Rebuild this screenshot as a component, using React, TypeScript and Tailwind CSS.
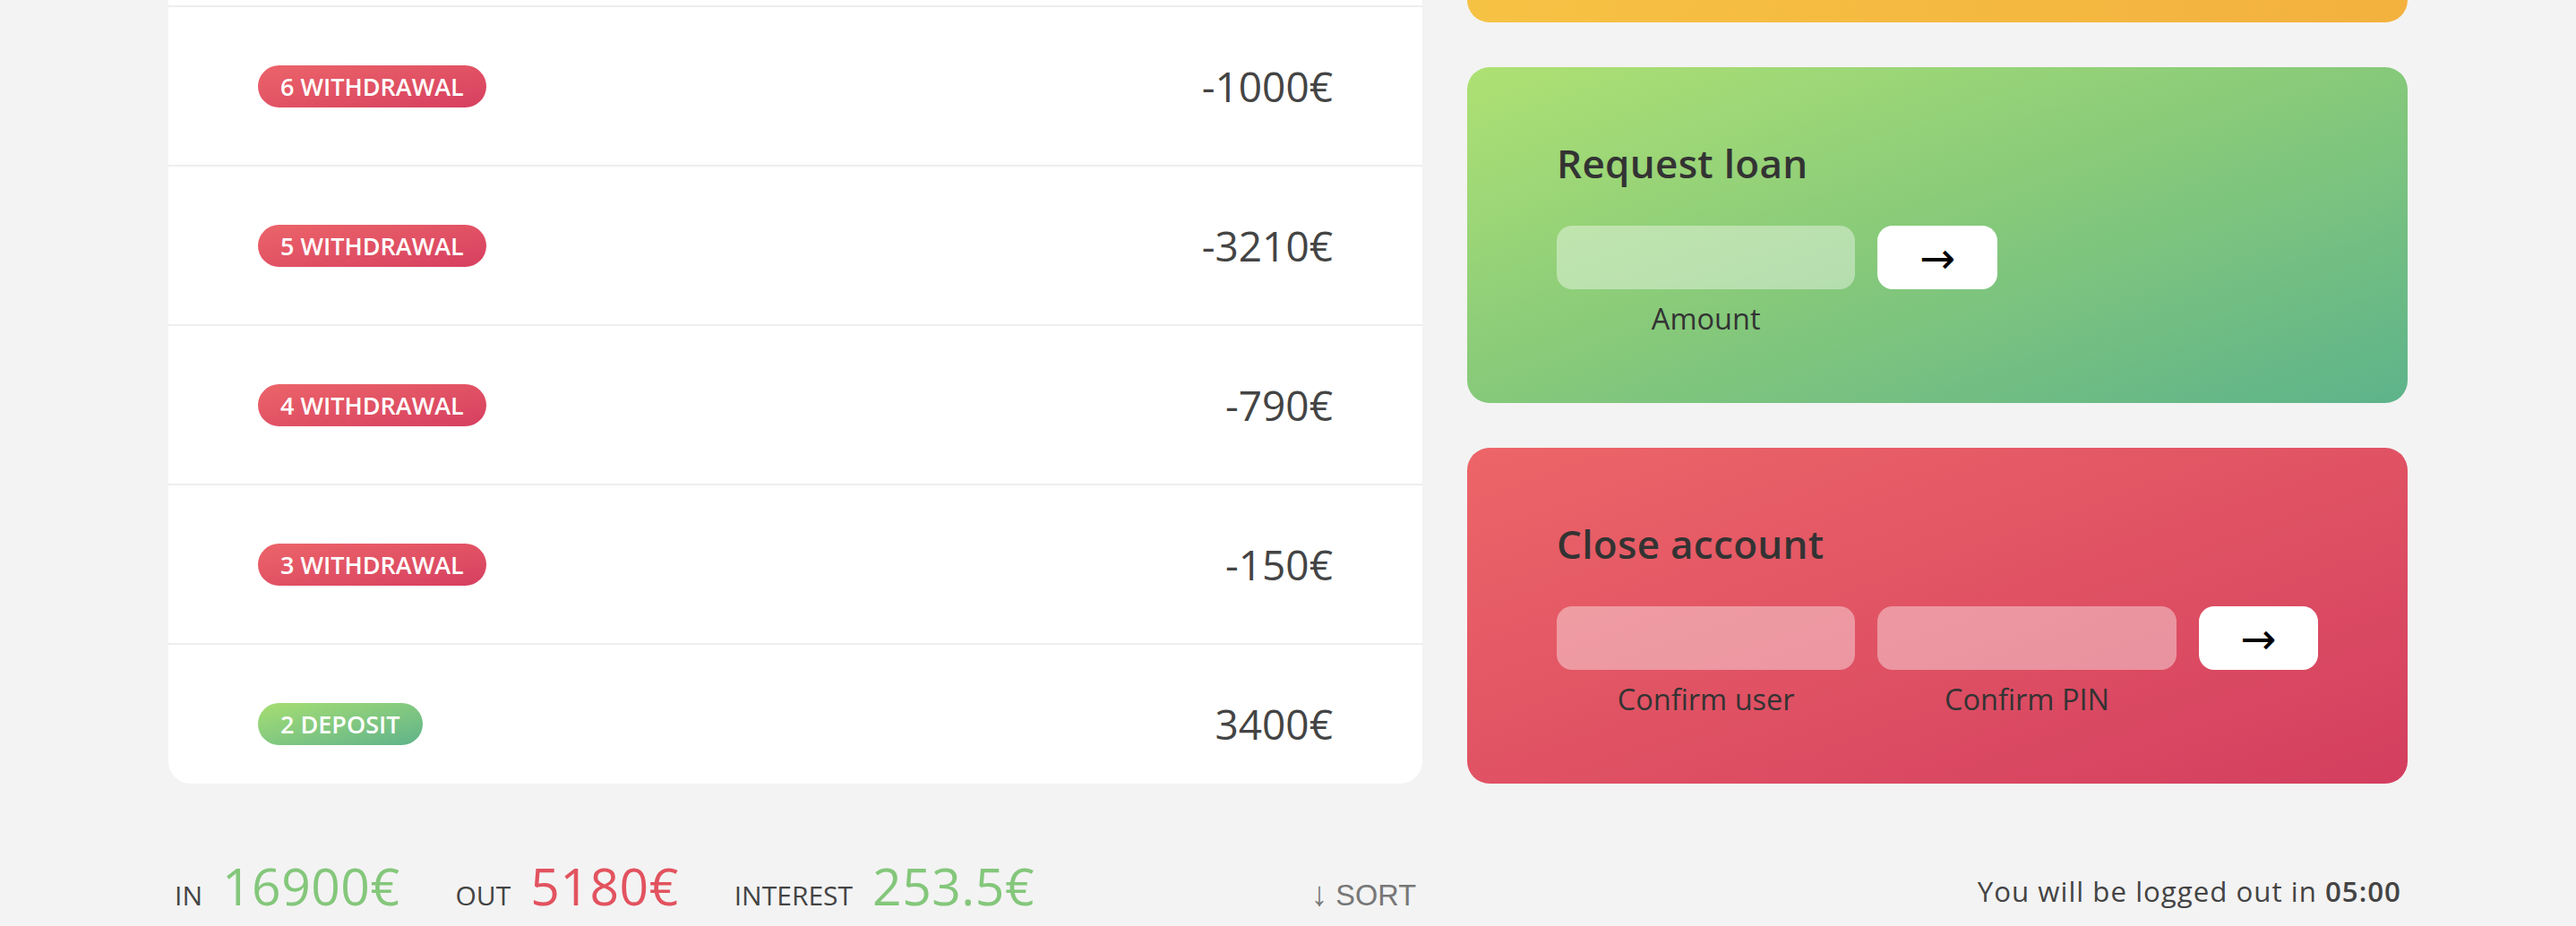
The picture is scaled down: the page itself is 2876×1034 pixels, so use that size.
import { memo } from "react"

const movements = [
  { n: 6, type: "withdrawal", value: -1000 },
  { n: 5, type: "withdrawal", value: -3210 },
  { n: 4, type: "withdrawal", value: -790 },
  { n: 3, type: "withdrawal", value: -150 },
  { n: 2, type: "deposit", value: 3400 },
]

const MovementRow = memo(function MovementRow({ n, type, value }: { n: number; type: string; value: number }) {
  const badge =
    type === "deposit"
      ? "bg-gradient-to-br from-[#a6de70] to-[#5fb38a]"
      : "bg-gradient-to-br from-[#ec6469] to-[#d63f60]"
  return (
    <div className="flex h-[178px] shrink-0 items-center border-b-2 border-[#eeeeee] px-[100px]">
      <div
        className={`flex h-[47px] items-center rounded-full px-[25px] text-[27px] font-semibold uppercase leading-none text-white ${badge}`}
      >
        {n} {type}
      </div>
      <div className="ml-auto text-[46px] leading-none text-[#444]">{value}€</div>
    </div>
  )
})

function Input({ className = "" }: { className?: string }) {
  return <div className={`h-[71px] rounded-[17px] bg-white/40 ${className}`} />
}

function ArrowButton() {
  return (
    <button className="flex h-[71px] items-center justify-center rounded-[17px] bg-white font-['DejaVu_Sans',sans-serif] text-[48px] leading-none text-black">
      →
    </button>
  )
}

function Label({ children }: { children: string }) {
  return <div className="mt-[12px] text-center text-[32.5px] leading-[42px] text-[#333]">{children}</div>
}

export default function App() {
  return (
    <div className="min-h-screen overflow-hidden bg-[#f3f3f3] font-['Open_Sans','DejaVu_Sans',sans-serif] text-[#444]">
      <div className="mx-auto grid w-[2500px] grid-cols-[4fr_3fr] grid-rows-[25px_375px_375px_auto] gap-x-[50px] gap-y-[50px]">
        {/* movements list, scrolled */}
        <div className="row-span-3 flex flex-col overflow-hidden rounded-b-[25px] bg-white">
          <div className="h-[8px] shrink-0 border-b-2 border-[#eeeeee]" />
          {movements.map((m) => (
            <MovementRow key={m.n} {...m} />
          ))}
        </div>

        {/* transfer card, bottom edge only */}
        <div className="rounded-b-[25px] bg-gradient-to-r from-[#f6c244] to-[#f3b13e]" />

        {/* loan */}
        <div className="rounded-[25px] bg-gradient-to-br from-[#aee173] via-[#86c97a] to-[#5db38a] px-[100px] pt-[75px]">
          <h2 className="mb-[38px] text-[44px] font-semibold leading-[64px] tracking-[0.3px] text-[#333]">Request loan</h2>
          <div className="grid grid-cols-[2.5fr_1fr_2.5fr] gap-x-[25px]">
            <div>
              <Input />
              <Label>Amount</Label>
            </div>
            <ArrowButton />
          </div>
        </div>

        {/* close */}
        <div className="rounded-[25px] bg-gradient-to-br from-[#ed6568] to-[#d33e5f] px-[100px] pt-[75px]">
          <h2 className="mb-[38px] text-[44px] font-semibold leading-[64px] tracking-[0.3px] text-[#333]">Close account</h2>
          <div className="grid grid-cols-[2.5fr_2.5fr_1fr] gap-x-[25px]">
            <div>
              <Input className="bg-white/35" />
              <Label>Confirm user</Label>
            </div>
            <div>
              <Input className="bg-white/35" />
              <Label>Confirm PIN</Label>
            </div>
            <ArrowButton />
          </div>
        </div>

        {/* summary */}
        <div className="mt-[25px] flex items-baseline px-[7px]">
          <span className="mr-[22px] text-[30px] font-medium uppercase text-[#444]">In</span>
          <span className="mr-[62px] text-[57px] leading-[78px] tracking-[0.5px] text-[#84c77b]">16900€</span>
          <span className="mr-[22px] text-[30px] font-medium uppercase text-[#444]">Out</span>
          <span className="mr-[62px] text-[57px] leading-[78px] tracking-[0.5px] text-[#e2535f]">5180€</span>
          <span className="mr-[22px] text-[30px] font-medium uppercase text-[#444]">Interest</span>
          <span className="text-[57px] leading-[78px] tracking-[0.5px] text-[#84c77b]">253.5€</span>
          <button className="ml-auto font-['Liberation_Sans',sans-serif] text-[32.5px] text-[#777]">
            <span className="text-[38px]">↓</span> SORT
          </button>
        </div>

        <p className="mt-[47px] px-[7px] text-right text-[31.25px] tracking-[1px] text-[#444]">
          You will be logged out in <span className="font-semibold">05:00</span>
        </p>
      </div>
    </div>
  )
}
